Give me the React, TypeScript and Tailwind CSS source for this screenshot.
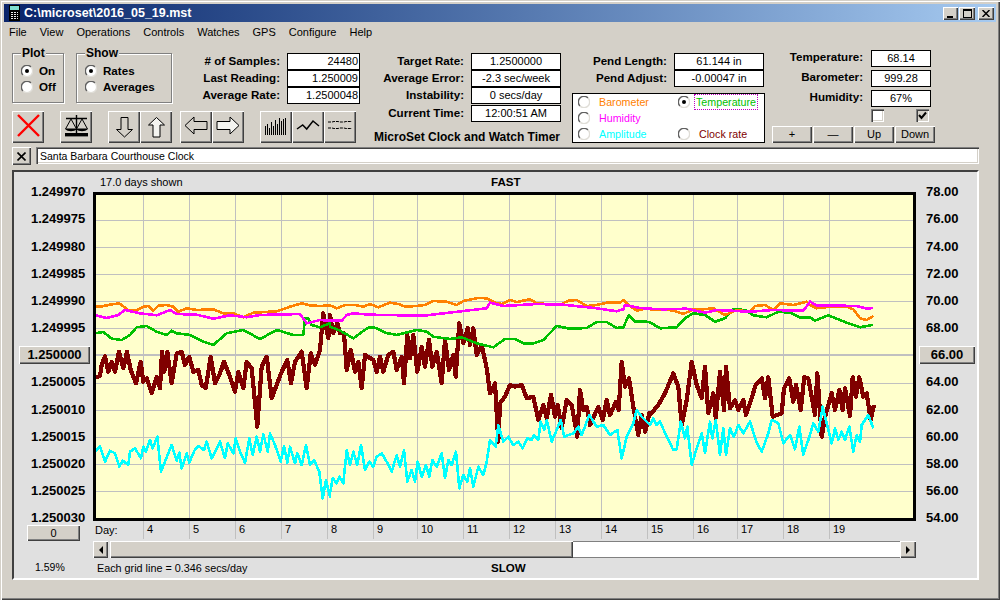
const raised =
  "bg-[#d4d0c8] shadow-[inset_1px_1px_0_#fff,inset_-1px_-1px_0_#404040,inset_-2px_-2px_0_#808080]";
const sunken =
  "shadow-[inset_1px_1px_0_#808080,inset_2px_2px_0_#404040,inset_-1px_-1px_0_#fff,inset_-2px_-2px_0_#d4d0c8]";

// traced from the plot: [x offset, [x, y, x, y...]] at 3x, per stretch of the chart
type Stretch = [number, number[]];

const toPoints = (stretches: Stretch[]) =>
  stretches
    .flatMap(([off, pts]) => {
      const out: string[] = [];
      for (let i = 0; i < pts.length; i += 2) {
        out.push(`${(off + pts[i] / 3).toFixed(1)},${(290 + pts[i + 1] / 3).toFixed(1)}`);
      }
      return out;
    })
    .join(" ");

const orange: Stretch[] = [
  [0, [283,48,300,50,330,44,358,40,385,60,410,60,430,50,445,48,460,62,475,47,500,45,520,50,535,65,560,55,590,60,640,58,670,70,700,70,730,82,760,68,830,64,870,50,905,40,930,46,960,48,990,46]],
  [330, [20,55,45,45,75,45,100,50,120,42,145,52,180,38,205,42,225,50,260,48,285,45,310,33,350,35,380,45,400,33,445,24,470,25,495,38,515,42,540,30,560,36,600,28,620,40,650,42,690,44,715,32,740,30,770,48,800,45,830,38,870,38,880,30,900,48,920,62,950,55]],
  [650, [0,58,40,58,70,62,100,72,130,58,160,58,190,55,225,75,260,60,300,65,315,48,345,45,370,60,390,40,430,45,470,35,480,45,500,55,540,50,590,50,610,58,630,85,650,90,670,78]],
];
const magenta: Stretch[] = [
  [0, [283,75,320,84,355,75,375,60,420,70,470,76,510,60,530,72,590,74,640,86,690,76,740,82,780,75,900,72,920,100,960,90,990,92]],
  [330, [35,92,50,75,70,70,120,74,280,77,470,55,480,38,520,48,620,42,700,44,800,55,860,64,880,58,885,45,930,54]],
  [650, [0,56,40,58,110,56,165,68,200,60,300,65,370,60,460,62,480,35,500,46,620,48,650,56,670,54]],
];
const green: Stretch[] = [
  [0, [283,130,310,126,335,146,365,150,390,135,410,112,440,108,470,125,500,135,515,122,530,130,570,135,610,155,640,165,680,130,730,120,780,147,830,120,880,135,910,135,915,85,925,85,935,105,960,112,990,100]],
  [330, [0,110,30,122,70,145,90,130,115,113,135,113,165,128,200,135,260,120,290,125,310,140,360,147,395,142,440,160,490,172,525,147,555,147,580,160,610,160,640,150,680,108,720,116,770,114,800,96,830,96,860,114,880,112,897,75,915,95,950,95]],
  [650, [0,97,30,115,80,112,105,85,130,70,165,75,195,95,225,85,250,58,285,60,310,76,350,82,385,65,420,68,450,83,480,82,495,92,535,76,590,98,630,112,670,104]],
];
const clockRate: Stretch[] = [
  [0, [283,263,300,258,305,225,315,198,325,245,335,215,345,245,357,185,370,235,381,185,392,240,408,280,422,215,430,275,440,265,455,310,470,260,480,295,486,185,493,245,502,185,515,280,530,190,545,185,555,225,568,200,580,245,595,240,605,285,617,295,632,200,645,280,660,250,672,215,690,260,705,305,715,245,730,295,740,215,755,235,772,410,785,230,800,200,815,325,830,285,845,245,862,210,873,280,885,215,905,185,920,295,932,190,945,225,960,180,970,70,985,145]],
  [330, [0,75,10,130,22,100,30,130,42,130,50,240,62,180,75,245,85,215,95,295,105,195,130,210,140,245,150,200,160,245,175,195,190,185,200,240,215,200,222,280,232,135,240,205,250,135,262,245,275,170,285,230,297,150,307,230,320,185,335,280,345,150,357,240,370,195,377,260,388,100,400,160,413,115,420,165,430,115,440,195,455,165,470,235,480,310,495,280,505,455,510,340,525,320,540,285,555,290,575,285,590,325,610,320,625,390,640,345,650,385,663,315,675,380,683,345,695,415,710,330,725,345,742,440,750,300,760,360,770,350,780,405,805,350,818,390,830,330,840,375,858,335,866,360,875,215,885,290,897,265,910,350,925,435,935,375,946,425,958,370]],
  [650, [0,375,25,345,45,310,70,250,85,290,95,405,110,330,125,215,140,285,155,325,165,230,175,370,190,310,197,385,210,245,222,360,228,230,240,355,255,330,265,360,280,330,288,375,300,340,317,285,335,265,345,325,355,262,368,380,395,370,402,295,418,265,430,335,438,285,452,360,463,262,475,265,495,375,502,250,515,440,525,380,545,310,555,360,568,300,578,360,585,295,600,378,608,262,618,320,628,262,640,320,650,310,662,390,672,345]],
];
const amplitude: Stretch[] = [
  [0, [283,487,300,470,315,515,330,482,345,490,358,530,368,512,385,525,390,485,405,475,423,505,430,470,437,485,450,450,458,475,472,440,483,545,497,510,515,465,530,512,538,488,545,535,560,490,568,518,583,482,595,468,612,480,620,455,635,505,660,455,675,505,683,460,700,490,707,445,722,490,735,518,748,445,758,495,770,440,780,485,790,432,803,485,810,430,825,465,842,515,852,468,862,518,870,470,885,520,892,490,905,525,918,465,930,525,942,510,958,545,968,625,978,570,990,620]],
  [330, [0,610,8,565,20,580,28,560,40,580,50,480,60,525,70,485,82,525,93,465,105,540,118,515,130,530,140,500,155,490,170,515,185,545,200,495,210,530,222,480,232,575,245,540,255,575,263,515,275,560,288,525,298,560,307,510,320,530,335,490,345,565,355,510,365,525,378,485,388,595,400,555,412,575,420,535,430,590,445,530,460,555,470,515,480,450,497,470,505,405,520,455,535,440,550,465,565,455,578,475,592,445,605,450,612,435,625,450,632,395,643,420,650,390,665,455,680,420,692,390,703,440,730,430,745,410,755,435,778,375,800,410,820,405,840,435,862,420,875,505,890,440,910,400,920,360,935,380,945,390]],
  [650, [0,405,10,385,20,405,30,395,50,440,70,480,80,478,92,395,105,445,112,410,125,525,140,475,155,430,165,490,180,395,187,445,197,390,210,495,220,415,228,495,240,415,252,440,265,405,280,430,300,395,320,458,335,485,355,430,365,390,385,400,400,460,420,435,435,478,448,410,460,495,480,435,490,400,505,425,518,350,530,400,545,460,555,415,565,450,575,425,585,450,598,410,610,485,620,435,630,455,635,405,655,375,670,415]],
];

const series: { pts: Stretch[]; color: string; w: number }[] = [
  { pts: clockRate, color: "#800000", w: 4.2 },
  { pts: amplitude, color: "#00ffff", w: 2.6 },
  { pts: green, color: "#00c000", w: 2.6 },
  { pts: orange, color: "#ff8000", w: 2.6 },
  { pts: magenta, color: "#ff00ff", w: 2.6 },
];

const gridX = [143, 189, 235, 281, 327, 373, 417, 463, 509, 555, 601, 647, 693, 737, 783, 829];
const gridY = [220, 247, 274, 301, 328, 383, 410, 437, 464, 491];
const days = [
  { d: 4, w: "w-[46px]" },
  { d: 5, w: "w-[46px]" },
  { d: 6, w: "w-[46px]" },
  { d: 7, w: "w-[46px]" },
  { d: 8, w: "w-[46px]" },
  { d: 9, w: "w-[44px]" },
  { d: 10, w: "w-[46px]" },
  { d: 11, w: "w-[46px]" },
  { d: 12, w: "w-[46px]" },
  { d: 13, w: "w-[46px]" },
  { d: 14, w: "w-[46px]" },
  { d: 15, w: "w-[46px]" },
  { d: 16, w: "w-[44px]" },
  { d: 17, w: "w-[46px]" },
  { d: 18, w: "w-[46px]" },
  { d: 19, w: "w-[46px]" },
];

const leftAxis = ["1.249970", "1.249975", "1.249980", "1.249985", "1.249990", "1.249995", "1.250000", "1.250005", "1.250010", "1.250015", "1.250020", "1.250025", "1.250030"];
const rightAxis = ["78.00", "76.00", "74.00", "72.00", "70.00", "68.00", "66.00", "64.00", "62.00", "60.00", "58.00", "56.00", "54.00"];

function Radio({ on }: { on?: boolean }) {
  return (
    <svg width="12" height="12" viewBox="0 0 12 12" className="shrink-0">
      <circle cx="6" cy="6" r="5.5" fill="#fff" />
      <path d="M2 10A5.5 5.5 0 0 1 10 2" fill="none" stroke="#606060" strokeWidth="1.4" />
      <path d="M10 2A5.5 5.5 0 0 1 2 10" fill="none" stroke="#e0ded8" strokeWidth="1.4" />
      {on && <circle cx="6" cy="6" r="2" fill="#000" />}
    </svg>
  );
}

function Readout({ label, value, labelW, boxW, right }: { label: string; value: string; labelW: string; boxW: string; right?: boolean }) {
  return (
    <div className="flex items-start gap-[7px]">
      <span className={`${labelW} whitespace-nowrap text-right text-[11.6px] font-bold leading-[15px]`}>{label}</span>
      <span className={`${boxW} flex h-[17px] items-center border border-black bg-white text-[11px] ${right ? "justify-end pr-[1px]" : "justify-center"}`}>{value}</span>
    </div>
  );
}

function SensorRow({ label, value }: { label: string; value: string }) {
  return (
    <div className="flex items-start gap-[8px]">
      <span className="w-[91px] text-right text-[11.6px] font-bold leading-[13px]">{label}</span>
      <span className="flex h-[17px] w-[60px] items-center justify-center border border-black bg-white text-[11px]">{value}</span>
    </div>
  );
}

function Group({ title, w, children }: { title: string; w: string; children: React.ReactNode }) {
  return (
    <div className={`relative h-[50px] ${w} border border-[#808080] pl-[8px] pt-[11px] shadow-[1px_1px_0_#fff,inset_1px_1px_0_#fff]`}>
      <span className="absolute -top-[8px] left-[8px] bg-[#d4d0c8] px-[1px] text-[12px] font-bold leading-[14px]">{title}</span>
      <div className="flex flex-col gap-[4px]">{children}</div>
    </div>
  );
}

function GroupRadio({ label, on }: { label: string; on?: boolean }) {
  return (
    <div className="flex h-[12px] items-center gap-[6px] text-[11.6px] font-bold leading-[12px]">
      <Radio on={on} />
      <span>{label}</span>
    </div>
  );
}

function ToolButton({ children, mr }: { children: React.ReactNode; mr?: string }) {
  return (
    <div className={`${raised} h-[32px] w-[32px] shrink-0 ${mr ?? ""}`}>
      <svg width="32" height="32" viewBox="0 0 32 32">
        {children}
      </svg>
    </div>
  );
}

function SourceRadio({ label, color, on, focus }: { label: string; color: string; on?: boolean; focus?: boolean }) {
  return (
    <div className="flex h-[16px] items-center gap-[9px] text-[10.7px]">
      <Radio on={on} />
      <span className={`${color} ${focus ? "-ml-[5px] border border-dotted border-[#c000c0] px-[1px] leading-[14px]" : ""}`}>{label}</span>
    </div>
  );
}

function SmallButton({ label, w }: { label: string; w: string }) {
  return <div className={`${raised} ${w} flex h-[17px] items-center justify-center text-[11px]`}>{label}</div>;
}

function Arrow({ dir }: { dir: "left" | "right" }) {
  return (
    <svg width="6" height="8" viewBox="0 0 6 8">
      <path d={dir === "left" ? "M5 0V8L1 4Z" : "M1 0V8L5 4Z"} fill="#000" />
    </svg>
  );
}

export default function App() {
  return (
    <div className="h-[600px] w-[1000px] overflow-hidden bg-[#d4d0c8] p-[4px] font-['Liberation_Sans',sans-serif] text-[#000] shadow-[inset_1px_1px_0_#d4d0c8,inset_2px_2px_0_#fff,inset_-1px_-1px_0_#404040,inset_-2px_-2px_0_#808080]">
      {/* title bar */}
      <div className="flex h-[18px] items-center bg-gradient-to-r from-[#0a246a] to-[#a6caf0] pl-[5px] pr-[2px]">
        <svg width="11" height="16" viewBox="0 0 11 16" className="shrink-0">
          <rect width="11" height="16" fill="#000" />
          <rect x="1" y="1" width="9" height="4" fill="#7fe0d0" />
          <path d="M2 7h2v1H2zM5 7h2v1H5zM8 7h1v1H8zM2 9h2v1H2zM5 9h2v1H5zM8 9h1v1H8zM2 11h2v1H2zM5 11h2v1H5zM8 11h1v1H8zM2 13h2v1H2zM5 13h2v1H5zM8 13h1v1H8z" fill="#e8e8e8" />
        </svg>
        <span className="ml-[4px] text-[12.5px] font-bold text-white">C:\microset\2016_05_19.mst</span>
        <div className="ml-auto flex items-center">
          <div className={`${raised} flex h-[13px] w-[15px] items-end justify-center pb-[2px]`}>
            <div className="ml-[-2px] h-[2px] w-[6px] bg-black" />
          </div>
          <div className={`${raised} ml-[1px] flex h-[13px] w-[16px] items-center justify-center`}>
            <div className="h-[9px] w-[9px] border border-t-2 border-black" />
          </div>
          <div className={`${raised} ml-[3px] flex h-[13px] w-[16px] items-center justify-center`}>
            <svg width="8" height="7" viewBox="0 0 8 7">
              <path d="M0.5 0L7.5 7M7.5 0L0.5 7" stroke="#000" strokeWidth="1.5" fill="none" />
            </svg>
          </div>
        </div>
      </div>

      {/* menu */}
      <div className="flex h-[20px] items-center gap-[13px] pl-[5px] text-[11px]">
        {["File", "View", "Operations", "Controls", "Watches", "GPS", "Configure", "Help"].map((m) => (
          <span key={m}>{m}</span>
        ))}
      </div>

      {/* controls */}
      <div className="flex h-[105px] pl-[8px] pt-[11px]">
        <div className="w-[348px] shrink-0">
          <div className="flex">
            <Group title="Plot" w="w-[52px]">
              <GroupRadio label="On" on />
              <GroupRadio label="Off" />
            </Group>
            <div className="w-[12px]" />
            <Group title="Show" w="w-[96px]">
              <GroupRadio label="Rates" on />
              <GroupRadio label="Averages" />
            </Group>
            <div className="ml-[8px] flex flex-col">
              <Readout label="# of Samples:" value="24480" labelW="w-[100px]" boxW="w-[73px]" right />
              <Readout label="Last Reading:" value="1.250009" labelW="w-[100px]" boxW="w-[73px]" right />
              <Readout label="Average Rate:" value="1.2500048" labelW="w-[100px]" boxW="w-[73px]" right />
            </div>
          </div>
          <div className="mt-[7px] flex">
            <ToolButton mr="mr-[16px]">
              <path d="M6 4L27 25M27 4L6 25" stroke="#ff0000" strokeWidth="2.4" fill="none" />
            </ToolButton>
            <ToolButton mr="mr-[16px]">
              <path d="M16.5 4V23M6 7.5H27" stroke="#000" strokeWidth="1.4" fill="none" />
              <path d="M11 8L5.5 18H16.5ZM22 8L16.5 18H27.5Z" stroke="#000" fill="#d4d0c8" />
              <path d="M5.5 18C7 21 15 21 16.5 18ZM16.5 18C18 21 26 21 27.5 18Z" fill="#000" />
              <rect x="5" y="22" width="23" height="3.4" fill="#000" />
            </ToolButton>
            <ToolButton>
              <path d="M13 6.5H20V18.5H24.5L16.5 26L8.5 18.5H13Z" fill="#d4d0c8" stroke="#000" />
            </ToolButton>
            <ToolButton mr="mr-[8px]">
              <path d="M13 26H20V14H24.5L16.5 6.5L8.5 14H13Z" fill="#f4f4f0" stroke="#000" />
            </ToolButton>
            <ToolButton>
              <path d="M27 10.5H14V6L5 14.5L14 23V18.5H27Z" fill="#d4d0c8" stroke="#000" />
            </ToolButton>
            <ToolButton mr="mr-[16px]">
              <path d="M5 10.5H18V6L27 14.5L18 23V18.5H5Z" fill="#f4f4f0" stroke="#000" />
            </ToolButton>
            <ToolButton>
              <path d="M5.5 24V15M7.5 24V13M9.5 24V17M11.5 24V11M13.5 24V15M15.5 24V9M17.5 24V13M19.5 24V7M21.5 24V10M23.5 24V8M25.5 24V7" stroke="#000" fill="none" />
            </ToolButton>
            <ToolButton>
              <path d="M5 18L10.7 14L14.7 18L21 10L27 15" stroke="#000" strokeWidth="1.5" fill="none" />
            </ToolButton>
            <ToolButton>
              <path d="M4 11H8L10 10.5H14L16 11H20L22 10.5H28M4 17H8L10 17.5H14L16 17H20L22 17.5H28" stroke="#000" strokeDasharray="3 1" fill="none" />
            </ToolButton>
          </div>
        </div>

        <div className="ml-[6px] flex w-[195px] shrink-0 flex-col">
          <Readout label="Target Rate:" value="1.2500000" labelW="w-[98px]" boxW="w-[90px]" />
          <Readout label="Average Error:" value="-2.3 sec/week" labelW="w-[98px]" boxW="w-[90px]" />
          <Readout label="Instability:" value="0 secs/day" labelW="w-[98px]" boxW="w-[90px]" />
          <div className="mt-[1px]">
            <Readout label="Current Time:" value="12:00:51 AM" labelW="w-[98px]" boxW="w-[90px]" />
          </div>
          <div className="ml-[8px] mt-[8px] whitespace-nowrap text-[12px] font-bold leading-[14px]">MicroSet Clock and Watch Timer</div>
        </div>

        <div className="ml-[11px] w-[193px] shrink-0">
          <Readout label="Pend Length:" value="61.144 in" labelW="w-[95px]" boxW="w-[90px]" />
          <Readout label="Pend Adjust:" value="-0.00047 in" labelW="w-[95px]" boxW="w-[90px]" />
          <div className="mt-[6px] grid h-[50px] w-[193px] grid-cols-[100px_1fr] content-center border border-black bg-white pl-[5px]">
            <SourceRadio label="Barometer" color="text-[#ff8000]" />
            <SourceRadio label="Temperature" color="text-[#00c000]" on focus />
            <SourceRadio label="Humidity" color="text-[#ff00ff]" />
            <div />
            <SourceRadio label="Amplitude" color="text-[#00ffff]" />
            <SourceRadio label="Clock rate" color="text-[#800000]" />
          </div>
        </div>

        <div className="-mt-[3px] ml-[7px] w-[163px] shrink-0">
          <div className="flex flex-col gap-[3px]">
            <SensorRow label="Temperature:" value="68.14" />
            <SensorRow label="Barometer:" value="999.28" />
            <SensorRow label="Humidity:" value="67%" />
          </div>
          <div className="mt-[2px] flex h-[13px] pl-[99px]">
            <div className={`${sunken} h-[13px] w-[13px] bg-white`} />
            <div className={`${sunken} ml-[32px] h-[13px] w-[13px] bg-[#d4d0c8]`}>
              <svg width="13" height="13" viewBox="0 0 13 13">
                <path d="M3 6L5.5 9L10 3.5" stroke="#000" strokeWidth="2" fill="none" />
              </svg>
            </div>
          </div>
          <div className="mt-[4px] flex gap-[1px]">
            <SmallButton label="+" w="w-[40px]" />
            <SmallButton label="—" w="w-[40px]" />
            <SmallButton label="Up" w="w-[40px]" />
            <SmallButton label="Down" w="w-[40px]" />
          </div>
        </div>
      </div>

      {/* clock name */}
      <div className="flex h-[19px] items-start gap-[5px] pl-[8px] pr-[17px]">
        <div className={`${raised} flex h-[18px] w-[19px] shrink-0 items-center justify-center`}>
          <svg width="9" height="9" viewBox="0 0 9 9">
            <path d="M0.5 0.5L8.5 8.5M8.5 0.5L0.5 8.5" stroke="#000" strokeWidth="1.6" fill="none" />
          </svg>
        </div>
        <div className={`${sunken} flex h-[17px] flex-1 items-center bg-white pl-[4px] pt-[2px] text-[10.5px]`}>Santa Barbara Courthouse Clock</div>
      </div>

      {/* plot panel */}
      <div className="ml-[8px] mt-[4px] h-[410px] w-[967px] border-2 border-b-[#fff] border-l-[#404040] border-r-[#fff] border-t-[#404040] bg-[#e0e0e0]">
        <div className="flex h-[20px] items-center text-[11px]">
          <span className="ml-[86px] w-[300px]">17.0 days shown</span>
          <span className="ml-[91px] text-[11.6px] font-bold">FAST</span>
        </div>

        <div className="flex h-[329px]">
          <div className="-mt-[7px] flex h-[340px] w-[79px] shrink-0 flex-col justify-between">
            {leftAxis.map((v) => (
              <div key={v} className="flex h-[14px] items-center text-[13px] font-bold">
                {v === "1.250000" ? (
                  <div className={`${raised} ml-[5px] flex h-[18px] w-[71px] items-center justify-center`}>{v}</div>
                ) : (
                  <span className="ml-[17px]">{v}</span>
                )}
              </div>
            ))}
          </div>

          <div className="h-[329px] w-[823px] shrink-0 border-[3px] border-black bg-[#ffffcc]">
            <svg width="817" height="323" viewBox="96 195 817 323" className="block">
              {gridX.map((x) => (
                <line key={x} x1={x + 0.5} x2={x + 0.5} y1="195" y2="518" stroke="#c0c0c0" />
              ))}
              {gridY.map((y) => (
                <line key={y} x1="96" x2="913" y1={y + 0.5} y2={y + 0.5} stroke="#c0c0c0" />
              ))}
              <line x1="96" x2="913" y1="355" y2="355" stroke="#c0c0c0" strokeWidth="2" />
              {series.map((s) => (
                <polyline key={s.color} points={toPoints(s.pts)} fill="none" stroke={s.color} strokeWidth={s.w} strokeLinejoin="round" shapeRendering="crispEdges" />
              ))}
            </svg>
          </div>

          <div className="-mt-[7px] flex h-[340px] flex-1 flex-col justify-between">
            {rightAxis.map((v) => (
              <div key={v} className="flex h-[14px] items-center text-[13px] font-bold">
                {v === "66.00" ? (
                  <div className={`${raised} ml-[3px] flex h-[18px] w-[56px] items-center justify-center`}>{v}</div>
                ) : (
                  <span className="ml-[10px]">{v}</span>
                )}
              </div>
            ))}
          </div>
        </div>

        <div className="flex h-[20px]">
          <div className="w-[79px] shrink-0 pl-[13px] pt-[4px]">
            <div className={`${raised} flex h-[16px] w-[53px] items-center justify-center text-[11px]`}>0</div>
          </div>
          <div className="flex h-[18px] items-start text-[11px]">
            <span className="w-[50px] pl-[2px] pt-[1px]">Day:</span>
            {days.map(({ d, w }) => (
              <span key={d} className={`${w} h-[18px] border-l border-[#c0c0c0] pl-[3px]`}>
                {d}
              </span>
            ))}
          </div>
        </div>

        <div className="ml-[79px] flex h-[17px] w-[823px]">
          <div className={`${raised} flex w-[15px] shrink-0 items-center justify-center`}>
            <Arrow dir="left" />
          </div>
          <div className={`${raised} ml-[2px] w-[463px] shrink-0`} />
          <div className="flex-1 bg-white shadow-[inset_0_1px_0_#808080,inset_0_-1px_0_#808080]" />
          <div className={`${raised} flex w-[16px] shrink-0 items-center justify-center`}>
            <Arrow dir="right" />
          </div>
        </div>

        <div className="flex h-[20px] items-center text-[11px]">
          <span className="w-[83px] pl-[21px] text-[10.5px]">1.59%</span>
          <span className="w-[300px] text-[10.8px]">Each grid line = 0.346 secs/day</span>
          <span className="ml-[94px] text-[11.6px] font-bold">SLOW</span>
        </div>
      </div>
    </div>
  );
}
